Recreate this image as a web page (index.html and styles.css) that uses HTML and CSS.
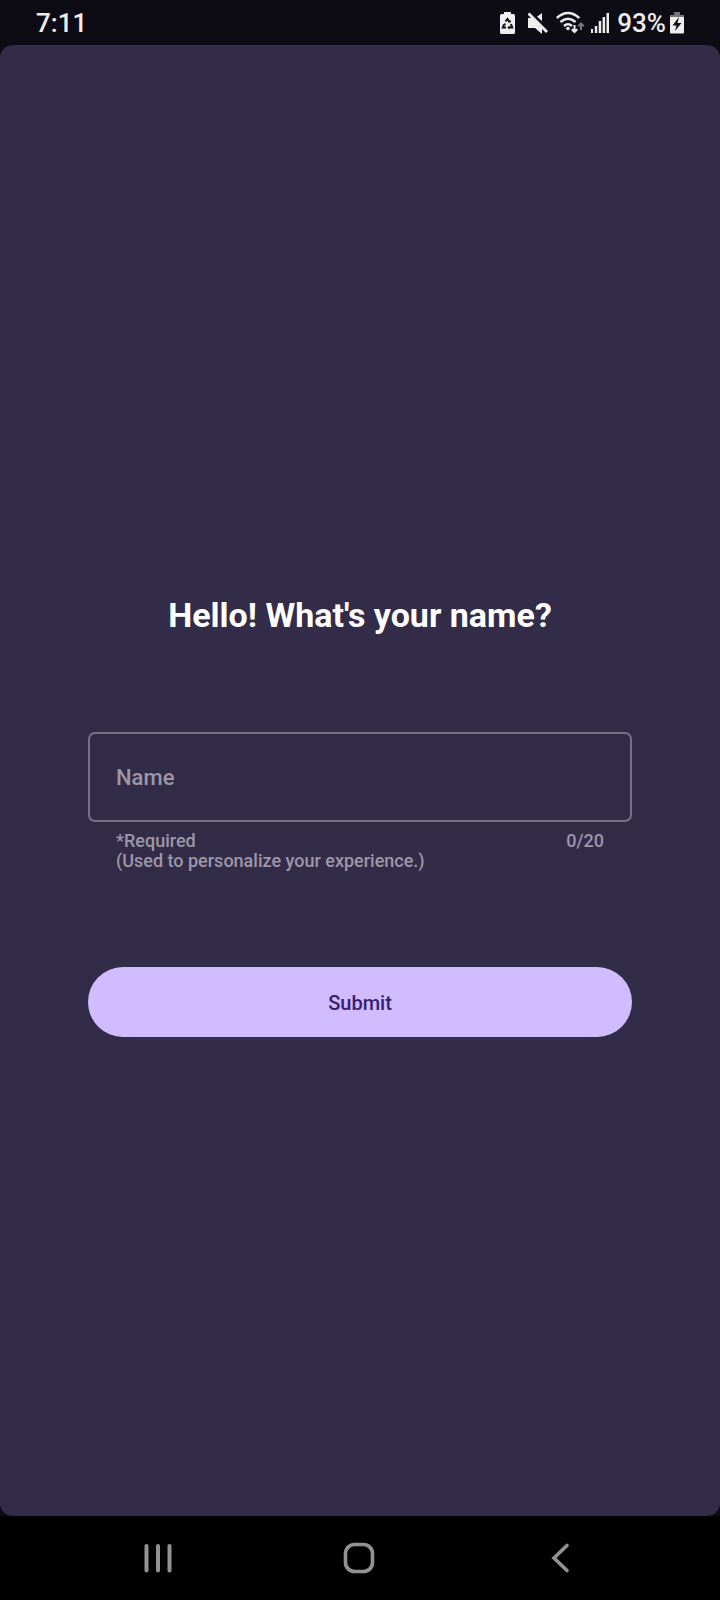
FILE: index.html
```html
<!DOCTYPE html>
<html lang="en">
<head>
<meta charset="utf-8">
<meta name="viewport" content="width=device-width, initial-scale=1">
<title>Welcome</title>
<link rel="stylesheet" href="styles.css">
</head>
<body>
<div class="screen">
  <header class="status">
    <span class="status-text">7:11</span>
    <div class="status-icons">
      <svg class="icon-battery-saver" width="15" height="22" viewBox="0 0 15 22" aria-hidden="true">
        <path fill="#eee" d="M4 0h7v2h2.500a1.500 1.500 0 0 1 1.500 1.500v17a1.500 1.500 0 0 1-1.500 1.500h-12A1.500 1.500 0 0 1 0 20.500v-17A1.500 1.500 0 0 1 1.500 2H4z"/>
        <path fill="none" stroke="#0d0b14" stroke-width="2" d="M5.500 9.500 7.500 7l2 3M11 12l1.200 3.500H9M6 15.500H2.800L4 12.500"/>
        <path fill="#0d0b14" d="M8 10.500h2.800V8zM9.500 13.500v4L7.300 15.500zM2.800 12.500l2.400-1.500.8 2.500z"/>
      </svg>
      <svg class="icon-mute" width="20" height="22" viewBox="0 0 20 22" aria-hidden="true">
        <path fill="#eee" d="M0 6h4l10 10v6l-7-6H0zM14 1v8L9 4.800z"/>
        <path stroke="#eee" stroke-width="2.800" d="M.5 1.500 19 20"/>
      </svg>
      <svg class="icon-wifi" width="30" height="24" viewBox="0 0 30 24" aria-hidden="true">
        <g fill="none" stroke="#eee" stroke-width="2.500">
          <path d="M.8 7Q12 -3 23.200 7M4.500 11Q12 4.500 19.500 11M8 15Q12 11.500 16 15"/>
          <path stroke-width="2" d="M18.500 14v7M15.800 18.300l2.700 2.700 2.700-2.700"/>
          <path stroke="#77757c" stroke-width="2" d="M25 19v-6.500M22.300 15.200l2.700-2.700 2.700 2.700"/>
        </g>
        <circle cx="12" cy="17.500" r="1.800" fill="#eee"/>
      </svg>
      <svg class="icon-signal" width="18" height="22" viewBox="0 0 18 22" aria-hidden="true">
        <path fill="#eee" d="M0 17h2v4H0zM3.800 14h2.400v7H3.800zM7.700 9h2.500v12H7.700zM11.600 5h2.500v16h-2.500zM15.500 1H18v20h-2.500z"/>
      </svg>
      <span class="status-text">93%</span>
      <svg class="icon-battery" width="14" height="22" viewBox="0 0 14 22" aria-hidden="true">
        <path fill="#77757c" d="M4 0h6v3h4v2H0V3h4z"/>
        <path fill="#eee" d="M0 5h14v15.500a1 1 0 0 1-1 1H1a1 1 0 0 1-1-1z"/>
        <path fill="#0d0b14" d="M9 5 2.500 13.500h4L5 19l6.500-8H7.500z"/>
      </svg>
    </div>
  </header>
  <main class="content">
    <form class="form">
      <h1 class="title">Hello! What's your name?</h1>
      <div class="field">
        <input class="input" id="name" type="text" maxlength="20" placeholder="Name" aria-label="Name" aria-describedby="hint" required>
        <div class="support">
          <p class="hint" id="hint">*Required<br>(Used to personalize your experience.)</p>
          <output class="counter" for="name">0/20</output>
        </div>
      </div>
      <button class="submit" type="submit">Submit</button>
    </form>
  </main>
  <nav class="nav" aria-label="System">
    <button class="nav-button" type="button" aria-label="Recent apps">
      <svg width="32" height="32" viewBox="0 0 32 32" aria-hidden="true"><path stroke="#929292" stroke-width="4" stroke-linecap="round" d="M4.500 4v24.500M16 4v24.500M27.500 4v24.500"/></svg>
    </button>
    <button class="nav-button" type="button" aria-label="Home">
      <svg width="32" height="32" viewBox="0 0 32 32" aria-hidden="true"><rect x="2.500" y="2.500" width="27" height="27" rx="9" fill="none" stroke="#929292" stroke-width="3.600"/></svg>
    </button>
    <button class="nav-button" type="button" aria-label="Back">
      <svg width="32" height="32" viewBox="0 0 32 32" aria-hidden="true"><path fill="none" stroke="#929292" stroke-width="3.600" stroke-linecap="round" d="M23 3.500 10 16l13 12.500"/></svg>
    </button>
  </nav>
</div>
</body>
</html>
```

FILE: styles.css
```css
* {
  box-sizing: border-box;
}

body {
  margin: 0;
  background: #0d0b14;
  font-family: Roboto, "Liberation Sans", sans-serif;
}

.screen {
  display: flex;
  flex-direction: column;
  min-height: 100vh;
}

.status {
  display: flex;
  align-items: center;
  justify-content: space-between;
  padding: 8px 36px 7px;
  color: #eee;
}

.status-text {
  font-size: 26px;
  font-weight: 500;
  line-height: 30px;
}

.status-icons {
  display: flex;
  align-items: center;
}

.icon-mute {
  margin-left: 13px;
}

.icon-wifi {
  margin-left: 8px;
}

.icon-signal {
  margin: 0 8px 0 5px;
}

.icon-battery {
  margin-left: 4px;
}

.content {
  display: flex;
  flex: 1;
  flex-direction: column;
  justify-content: center;
  padding: 94px 88px 24px;
  border-radius: 13px;
  background: #332c48;
}

.form {
  display: flex;
  flex-direction: column;
}

.title {
  margin: 0 0 96px;
  color: #fff;
  font-size: 34px;
  font-weight: 700;
  line-height: 42px;
  text-align: center;
}

.field {
  margin-bottom: 96px;
}

.input {
  display: block;
  width: 100%;
  height: 90px;
  padding: 0 26px;
  border: 2px solid #777184;
  border-radius: 7px;
  background: transparent;
  color: #fff;
  font: 500 22px/28px Roboto, "Liberation Sans", sans-serif;
}

.input::placeholder {
  color: #9d97a7;
  opacity: 1;
}

.support {
  display: flex;
  justify-content: space-between;
  padding: 9px 28px 0;
  color: #9d97a7;
  font-size: 18px;
  font-weight: 500;
  line-height: 20px;
}

.hint {
  margin: 0;
}

.submit {
  height: 70px;
  padding: 2px 0 0;
  border: 0;
  border-radius: 35px;
  background: #d0bcff;
  color: #381e72;
  font: 500 20px/28px Roboto, "Liberation Sans", sans-serif;
}

.nav {
  display: grid;
  grid-template-columns: repeat(3, 1fr);
  padding: 0 59px 0 57px;
  background: #000;
}

.nav-button {
  display: flex;
  align-items: center;
  justify-content: center;
  height: 84px;
  padding: 0;
  border: 0;
  background: none;
}
```
